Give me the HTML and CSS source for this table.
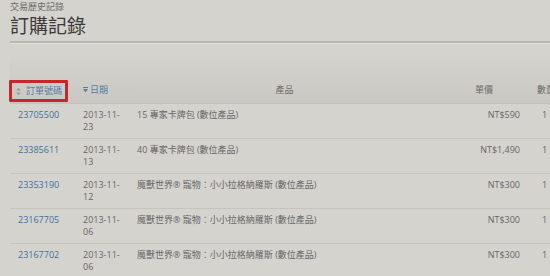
FILE: index.html
```html
<!DOCTYPE html>
<html lang="zh-Hant">

<head>
    <meta charset="UTF-8">
    <meta name="viewport" content="width=device-width, initial-scale=1.0">
    <title>訂購記錄</title>
    <link rel="stylesheet" href="styles.css">
</head>

<body>
    <div class="page">
        <div class="crumb">交易歷史記錄</div>
        <h1 class="title">訂購記錄</h1>
        <div class="rule"></div>

        <table class="orders">
            <colgroup>
                <col class="c-id">
                <col class="c-date">
                <col class="c-product">
                <col class="c-price">
                <col class="c-qty">
            </colgroup>
            <thead>
                <tr>
                    <th class="th-id">
                        <div class="mark">
                            <svg class="sort-both" width="5" height="7" viewBox="0 0 5 7">
                                <path d="M2.5 0 L5 2.6 H0 Z M2.5 7 L5 4.4 H0 Z" fill="#9a9a96" />
                            </svg>
                            <span class="sortable">訂單號碼</span>
                        </div>
                    </th>
                    <th class="th-date">
                        <div class="sort-head">
                            <svg class="sort-down" width="5" height="6" viewBox="0 0 5 6">
                                <path d="M0 0.5 H5" stroke="#5b7f9e" stroke-width="1" />
                                <path d="M0 2 H5 L2.5 5.5 Z" fill="#5b7f9e" />
                            </svg>
                            <span class="sortable">日期</span>
                        </div>
                    </th>
                    <th class="center">產品</th>
                    <th class="center">單價</th>
                    <th class="th-qty">數量</th>
                </tr>
            </thead>
            <tbody>
                <tr>
                    <td><a href="#">23705500</a></td>
                    <td class="date">2013-11-23</td>
                    <td>15 專家卡牌包 (數位產品)</td>
                    <td class="price">NT$590</td>
                    <td class="qty">1</td>
                </tr>
                <tr>
                    <td><a href="#">23385611</a></td>
                    <td class="date">2013-11-13</td>
                    <td>40 專家卡牌包 (數位產品)</td>
                    <td class="price">NT$1,490</td>
                    <td class="qty">1</td>
                </tr>
                <tr>
                    <td><a href="#">23353190</a></td>
                    <td class="date">2013-11-12</td>
                    <td>魔獸世界® 寵物：小小拉格納羅斯 (數位產品)</td>
                    <td class="price">NT$300</td>
                    <td class="qty">1</td>
                </tr>
                <tr>
                    <td><a href="#">23167705</a></td>
                    <td class="date">2013-11-06</td>
                    <td>魔獸世界® 寵物：小小拉格納羅斯 (數位產品)</td>
                    <td class="price">NT$300</td>
                    <td class="qty">1</td>
                </tr>
                <tr>
                    <td><a href="#">23167702</a></td>
                    <td class="date">2013-11-06</td>
                    <td>魔獸世界® 寵物：小小拉格納羅斯 (數位產品)</td>
                    <td class="price">NT$300</td>
                    <td class="qty">1</td>
                </tr>
            </tbody>
        </table>
    </div>
</body>

</html>
```

FILE: styles.css
```css
html,
body {
    margin: 0;
    height: 100%;
    overflow: hidden;
    background: #d5d3ce;
}

body {
    font-family: "Open Sans", "Noto Sans CJK TC", sans-serif;
    color: #666;
}

.page {
    padding-left: 10px;
}

/* 頁首 */
.crumb {
    padding-top: 1px;
    font-size: 9px;
    line-height: 12px;
    color: #6a6a66;
}

.title {
    margin: 0;
    padding-top: 2px;
    font-family: "Noto Sans CJK TC", sans-serif;
    font-size: 19px;
    font-weight: normal;
    line-height: 20px;
    color: #3a3a38;
}

.rule {
    margin-top: 6px;
    border-top: 2px solid #bab8b3;
    border-bottom: 1px solid #e4e2dd;
}

/* 訂單表格 */
.orders {
    margin-top: 12px;
    width: 560px;
    table-layout: fixed;
    border-collapse: collapse;
    font-size: 9px;
    line-height: 12px;
    white-space: nowrap;
}

.c-id { width: 65px; }
.c-date { width: 54px; }
.c-product { width: 311px; }
.c-price { width: 88px; }
.c-qty { width: 42px; }

.orders th {
    height: 40px;
    padding: 0 8px 7px;
    vertical-align: bottom;
    text-align: left;
    font-weight: normal;
    color: #6a6a66;
    background: linear-gradient(#d4d2cd, #cac8c3);
    border-bottom: 1px solid #c4c2bd;
}

.orders th.center {
    text-align: center;
}

.orders th.th-id {
    padding-bottom: 1px;
}

.orders th.th-qty {
    padding-left: 9px;
}

.sortable {
    color: #4f7ca4;
}

/* 紅框標示 */
.mark {
    display: flex;
    align-items: center;
    width: fit-content;
    margin-left: -9px;
    padding: 2px 3px 2px 4px;
    border: 3px solid #c8262b;
    border-radius: 1px;
}

.sort-both {
    margin-right: 5px;
}

.sort-head {
    display: flex;
    align-items: center;
    gap: 2px;
}

.orders td {
    padding: 5px 8px;
    vertical-align: top;
    border-top: 1px solid #e1dfda;
    border-bottom: 1px solid #c6c4bf;
}

.orders td a {
    color: #41709a;
    text-decoration: none;
}

.orders td.date {
    white-space: normal;
    word-break: break-all;
}

.orders td.price {
    text-align: right;
}

.orders td.qty {
    padding-left: 14px;
}
```
